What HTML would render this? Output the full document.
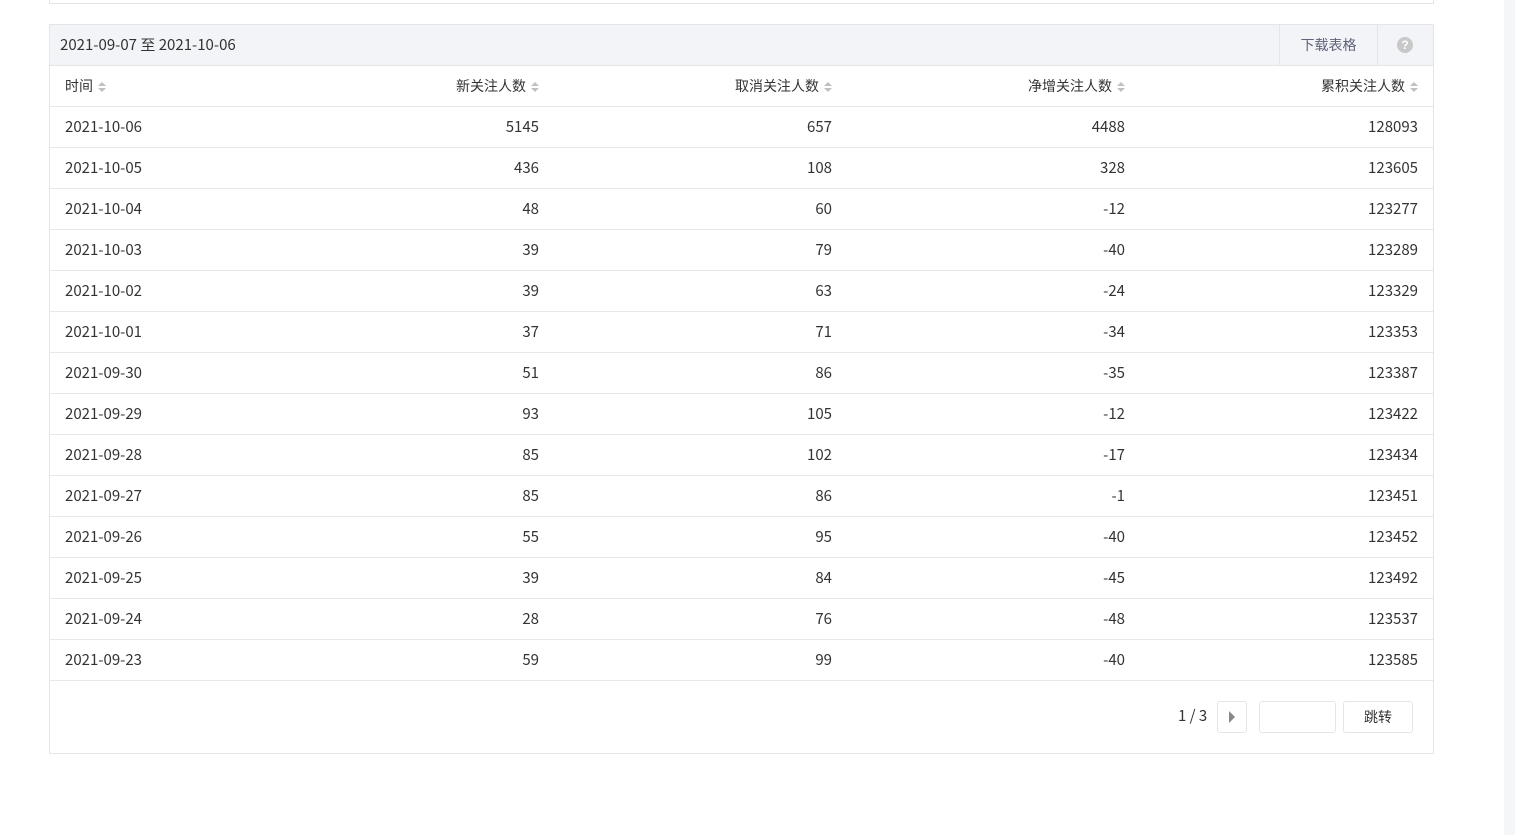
<!DOCTYPE html>
<html><head><meta charset="utf-8"><style>
body{margin:0;width:1515px;height:835px;background:#fff;font-family:"Noto Sans CJK SC","Liberation Sans",sans-serif;color:#333;position:relative;overflow:hidden}
.strip{position:absolute;left:1504px;top:0;width:11px;height:835px;background:#f5f6f8}
.topbox{position:absolute;left:49px;top:-10px;width:1383px;height:13px;border:1px solid #e5e5e5;border-top:none}
.box{position:absolute;left:49px;top:24px;width:1383px;height:728px;border:1px solid #e5e5e5}
.hd{height:40px;background:#f3f4f7;border-bottom:1px solid #e5e5e5;position:relative;font-size:15px;line-height:40px}
.hd .d{position:absolute;left:10px}
.hd .dl{position:absolute;left:1229px;width:97px;height:40px;border-left:1px solid #e5e5e5;border-right:1px solid #e5e5e5;text-align:center;color:#5d6379;font-size:14px}
.hd .q{position:absolute;left:1347px;top:12px;width:16px;height:16px;border-radius:50%;background:#c8c8c8;color:#fff;font-size:12px;line-height:16px;text-align:center;font-weight:bold;font-family:"Liberation Sans",sans-serif}
.row{height:40px;border-bottom:1px solid #e8e8e8;position:relative;font-size:15px;line-height:40px}
.row span{position:absolute}
.c0{left:15px}
.c1{right:894px}.c2{right:601px}.c3{right:308px}.c4{right:15px}
.th{font-size:14px}
.s{display:inline-block;width:8px;height:10px;position:relative;margin-left:5px;vertical-align:-1px}
.s:before,.s:after{content:"";position:absolute;left:0;border-left:4px solid transparent;border-right:4px solid transparent}
.s:before{top:0;border-bottom:4px solid #c0c0c0}
.s:after{bottom:0;border-top:4px solid #c0c0c0}
.pg{position:absolute;font-size:15px}
</style></head><body>
<div class="strip"></div>
<div class="topbox"></div>
<div class="box">
<div class="hd"><span class="d">2021-09-07 至 2021-10-06</span><span class="dl">下载表格</span><span class="q">?</span></div>
<div class="row th"><span class="c0">时间<i class="s"></i></span><span style="right:894px">新关注人数<i class="s"></i></span><span style="right:601px">取消关注人数<i class="s"></i></span><span style="right:308px">净增关注人数<i class="s"></i></span><span style="right:15px">累积关注人数<i class="s"></i></span></div>
<div class="row"><span class="c0">2021-10-06</span><span class="c1">5145</span><span class="c2">657</span><span class="c3">4488</span><span class="c4">128093</span></div>
<div class="row"><span class="c0">2021-10-05</span><span class="c1">436</span><span class="c2">108</span><span class="c3">328</span><span class="c4">123605</span></div>
<div class="row"><span class="c0">2021-10-04</span><span class="c1">48</span><span class="c2">60</span><span class="c3">-12</span><span class="c4">123277</span></div>
<div class="row"><span class="c0">2021-10-03</span><span class="c1">39</span><span class="c2">79</span><span class="c3">-40</span><span class="c4">123289</span></div>
<div class="row"><span class="c0">2021-10-02</span><span class="c1">39</span><span class="c2">63</span><span class="c3">-24</span><span class="c4">123329</span></div>
<div class="row"><span class="c0">2021-10-01</span><span class="c1">37</span><span class="c2">71</span><span class="c3">-34</span><span class="c4">123353</span></div>
<div class="row"><span class="c0">2021-09-30</span><span class="c1">51</span><span class="c2">86</span><span class="c3">-35</span><span class="c4">123387</span></div>
<div class="row"><span class="c0">2021-09-29</span><span class="c1">93</span><span class="c2">105</span><span class="c3">-12</span><span class="c4">123422</span></div>
<div class="row"><span class="c0">2021-09-28</span><span class="c1">85</span><span class="c2">102</span><span class="c3">-17</span><span class="c4">123434</span></div>
<div class="row"><span class="c0">2021-09-27</span><span class="c1">85</span><span class="c2">86</span><span class="c3">-1</span><span class="c4">123451</span></div>
<div class="row"><span class="c0">2021-09-26</span><span class="c1">55</span><span class="c2">95</span><span class="c3">-40</span><span class="c4">123452</span></div>
<div class="row"><span class="c0">2021-09-25</span><span class="c1">39</span><span class="c2">84</span><span class="c3">-45</span><span class="c4">123492</span></div>
<div class="row"><span class="c0">2021-09-24</span><span class="c1">28</span><span class="c2">76</span><span class="c3">-48</span><span class="c4">123537</span></div>
<div class="row"><span class="c0">2021-09-23</span><span class="c1">59</span><span class="c2">99</span><span class="c3">-40</span><span class="c4">123585</span></div>
<span class="pg" style="left:1128px;top:680px">1 / 3</span>
<div style="position:absolute;left:1167px;top:676px;width:28px;height:30px;border:1px solid #e5e5e5;border-radius:3px"><div style="position:absolute;left:11px;top:9px;border-left:6px solid #888;border-top:6px solid transparent;border-bottom:6px solid transparent"></div></div>
<div style="position:absolute;left:1209px;top:676px;width:75px;height:30px;border:1px solid #e5e5e5;border-radius:3px"></div>
<div style="position:absolute;left:1293px;top:676px;width:68px;height:30px;border:1px solid #e5e5e5;border-radius:3px;text-align:center;line-height:30px;font-size:14px">跳转</div>
</div>
</body></html>
